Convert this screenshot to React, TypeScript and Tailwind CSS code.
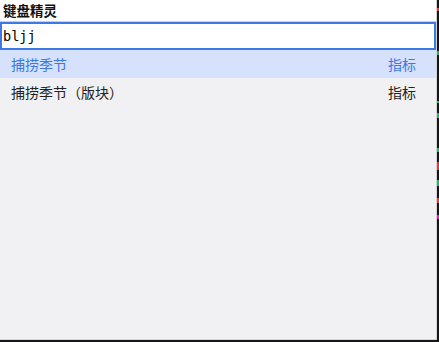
import React from "react";

const results = [
  { name: "捕捞季节", kind: "指标", active: true },
  { name: "捕捞季节（版块）", kind: "指标", active: false },
];

export default function App() {
  return (
    <div className="flex h-[342px] w-[439px] bg-[#161616] font-['Noto_Sans_CJK_SC',sans-serif]">
      <div className="flex h-[340px] w-[437px] flex-col border-r border-b border-[#d4d4d6] bg-[#f1f1f3]">
        {/* Title bar */}
        <div className="flex h-[22px] items-center border-b border-[#cfcfd1] bg-white px-[3px] text-[13.5px] font-bold leading-none text-[#111]">
          键盘精灵
        </div>

        {/* Search input */}
        <div className="flex h-[28px] items-center border-2 border-[#3c78e6] bg-white px-[1px] font-['DejaVu_Sans_Mono',monospace] text-[13.5px] text-black">
          bljj
        </div>

        {/* Results */}
        <div className="flex flex-col">
          {results.map((r) => (
            <div
              key={r.name}
              className={`flex h-[28px] items-center justify-between pl-[11px] pr-[20px] text-[14px] ${
                r.active ? "bg-[#d5e1fd] text-[#3c78e6]" : "text-[#222]"
              }`}
            >
              <span>{r.name}</span>
              <span>{r.kind}</span>
            </div>
          ))}
        </div>
      </div>

      {/* chart edge showing behind the popup */}
      <div className="flex w-[2px] flex-col pt-[8px]">
        <div className="h-[3px] bg-[#e0393e]" />
        <div className="mt-[40px] h-[4px] bg-[#1fb86b]" />
        <div className="mt-[46px] h-[2px] bg-[#1fb86b]" />
        <div className="mt-[10px] h-[5px] bg-[#1fb86b]" />
        <div className="mt-[30px] h-[4px] bg-[#1fb86b]" />
        <div className="mt-[10px] h-[8px] bg-[#e0393e]" />
        <div className="mt-[10px] h-[6px] bg-[#1fb86b]" />
        <div className="mt-[12px] h-[5px] bg-[#e0393e]" />
        <div className="mt-[12px] h-[4px] bg-[#e020b0]" />
      </div>
    </div>
  );
}
